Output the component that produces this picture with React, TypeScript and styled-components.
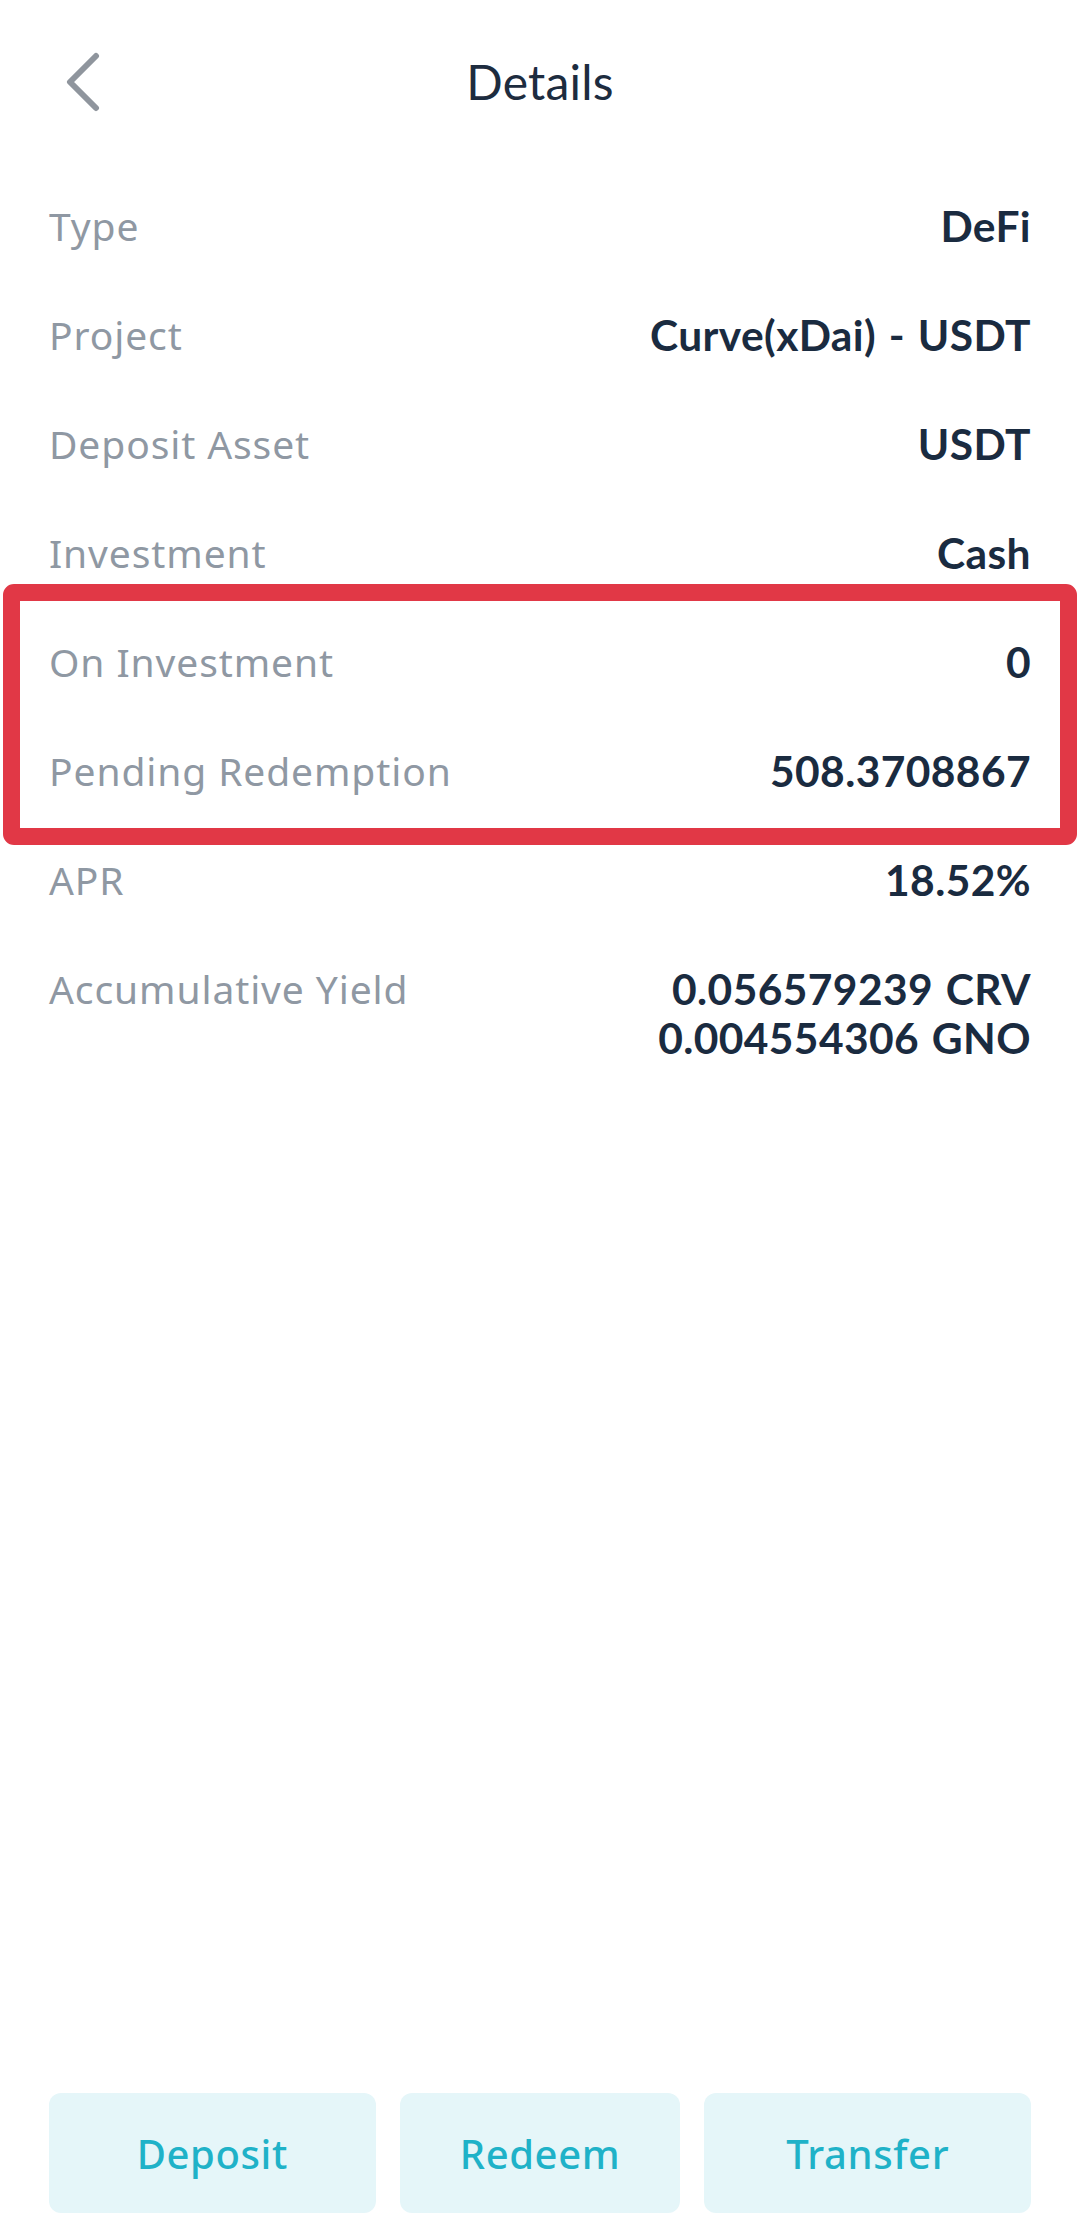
import React from "react";
import styled, { createGlobalStyle } from "styled-components";

const GlobalStyle = createGlobalStyle`
  html, body {
    margin: 0;
    padding: 0;
    background: #ffffff;
  }
  body {
    font-family: "Noto Sans", "Open Sans", Arial, sans-serif;
    -webkit-font-smoothing: antialiased;
  }
`;

const Page = styled.div`
  width: 1080px;
  min-height: 2240px;
  display: flex;
  flex-direction: column;
  background: #ffffff;
`;

const Header = styled.header`
  height: 171px;
  display: grid;
  grid-template-columns: 1fr auto 1fr;
  align-items: center;
  padding: 0 49px;
  box-sizing: border-box;
  margin-top: -4px;
`;

const BackButton = styled.button`
  justify-self: start;
  width: 56px;
  height: 70px;
  padding: 0;
  margin-left: 14px;
  border: none;
  background: transparent;
  display: flex;
  align-items: center;
  justify-content: flex-start;
  cursor: pointer;
`;

const Title = styled.h1`
  margin: 0;
  font-family: "Lato", "Noto Sans", sans-serif;
  font-weight: 400;
  font-size: 48px;
  color: #1d2c3f;
  letter-spacing: 0.2px;
`;

const List = styled.div`
  display: flex;
  flex-direction: column;
  padding: 0 49px;
  margin-top: 4px;
`;

const Row = styled.div`
  display: flex;
  justify-content: space-between;
  align-items: flex-start;
  padding: 29px 0;
`;

const Label = styled.span`
  font-family: "Noto Sans", "Open Sans", sans-serif;
  font-size: 39px;
  line-height: 51px;
  color: #8f98a3;
  letter-spacing: 0.9px;
`;

const Value = styled.div`
  margin-top: 1px;
  display: flex;
  flex-direction: column;
  align-items: flex-end;
  text-align: right;
  font-family: "Lato", "Noto Sans", sans-serif;
  font-weight: 700;
  font-size: 42.5px;
  line-height: 49px;
  letter-spacing: 0.4px;
  word-spacing: 2px;
  color: #1a2b40;
`;

const Highlight = styled.div`
  position: relative;
  display: flex;
  flex-direction: column;

  &::after {
    content: "";
    position: absolute;
    top: -23px;
    bottom: -20px;
    left: -46px;
    right: -46px;
    border: 17px solid #e13846;
    border-radius: 11px;
    pointer-events: none;
  }
`;

const Footer = styled.footer`
  margin-top: auto;
  display: grid;
  grid-template-columns: 327fr 281fr 327fr;
  gap: 24px;
  padding: 0 49px 27px;
`;

const ActionButton = styled.button`
  height: 120px;
  border: none;
  border-radius: 12px;
  background: #e5f6f9;
  color: #1fb2c8;
  font-family: "Noto Sans", "Open Sans", sans-serif;
  font-weight: 500;
  font-size: 40px;
  letter-spacing: 0.6px;
  cursor: pointer;
`;

type Item = { label: string; value: string[] };

const top: Item[] = [
  { label: "Type", value: ["DeFi"] },
  { label: "Project", value: ["Curve(xDai) - USDT"] },
  { label: "Deposit Asset", value: ["USDT"] },
  { label: "Investment", value: ["Cash"] },
];

const highlighted: Item[] = [
  { label: "On Investment", value: ["0"] },
  { label: "Pending Redemption", value: ["508.3708867"] },
];

const bottom: Item[] = [
  { label: "APR", value: ["18.52%"] },
  { label: "Accumulative Yield", value: ["0.056579239 CRV", "0.004554306 GNO"] },
];

const DetailRow = ({ item }: { item: Item }) => (
  <Row>
    <Label>{item.label}</Label>
    <Value>
      {item.value.map((v) => (
        <span key={v}>{v}</span>
      ))}
    </Value>
  </Row>
);

const ChevronLeft = () => (
  <svg width="40" height="60" viewBox="0 0 40 60" fill="none">
    <path
      d="M33 4 L7 30 L33 56"
      stroke="#8f959d"
      strokeWidth="6"
      strokeLinecap="round"
      strokeLinejoin="round"
    />
  </svg>
);

export default function App() {
  return (
    <>
      <GlobalStyle />
      <Page>
        <Header>
          <BackButton aria-label="Back">
            <ChevronLeft />
          </BackButton>
          <Title>Details</Title>
          <span />
        </Header>
        <List>
          {top.map((it) => (
            <DetailRow key={it.label} item={it} />
          ))}
          <Highlight>
            {highlighted.map((it) => (
              <DetailRow key={it.label} item={it} />
            ))}
          </Highlight>
          {bottom.map((it) => (
            <DetailRow key={it.label} item={it} />
          ))}
        </List>
        <Footer>
          <ActionButton>Deposit</ActionButton>
          <ActionButton>Redeem</ActionButton>
          <ActionButton>Transfer</ActionButton>
        </Footer>
      </Page>
    </>
  );
}
